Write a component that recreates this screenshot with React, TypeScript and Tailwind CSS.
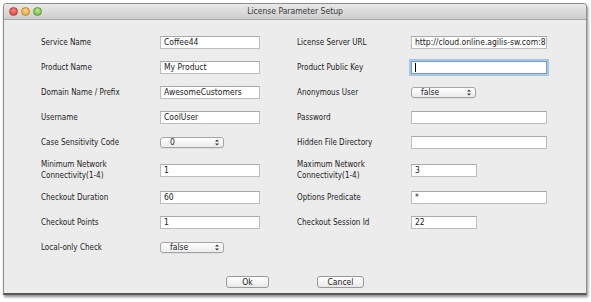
import React from "react";

const font = { fontFamily: '"DejaVu Sans Condensed", "DejaVu Sans", "Liberation Sans", sans-serif' };

function TextField({ value, w, focus }: { value: string; w: string; focus?: boolean }) {
  return (
    <div
      className={
        "h-[13px] bg-white flex items-center pl-[3px] text-[8.5px] text-[#1a1a1a] overflow-hidden whitespace-nowrap " +
        w +
        (focus
          ? " border border-[#6f9fd6] shadow-[0_0_0_2px_rgba(120,165,220,0.55)]"
          : " border border-[#bdbdbd] border-t-[#a9a9a9]")
      }
    >
      {focus ? <span className="w-px h-[9px] bg-black" /> : value}
    </div>
  );
}

function Select({ value, w }: { value: string; w: string }) {
  return (
    <div
      className={
        "h-[11px] rounded-[3px] border border-[#a5a5a5] bg-gradient-to-b from-white to-[#ececec] flex items-center justify-between pl-[9px] pr-[4px] text-[8.5px] text-[#1a1a1a] shadow-[0_1px_0_rgba(0,0,0,0.06)] " +
        w
      }
    >
      <span>{value}</span>
      <svg width="4" height="7" viewBox="0 0 4 7">
        <path d="M0 2.6 L2 0.4 L4 2.6 Z" fill="#333" />
        <path d="M0 4.4 L2 6.6 L4 4.4 Z" fill="#333" />
      </svg>
    </div>
  );
}

type Cell = { label: React.ReactNode; control: React.ReactNode } | null;

function Row({ h, left, right }: { h: string; left: Cell; right: Cell }) {
  return (
    <div className={"flex items-center " + h}>
      <div className="w-[119px] text-[8px] text-[#1c1c1c] leading-[11px]">{left?.label}</div>
      <div className="w-[137px]">{left?.control}</div>
      <div className="w-[114px] text-[8px] text-[#1c1c1c] leading-[11px]">{right?.label}</div>
      <div>{right?.control}</div>
    </div>
  );
}

export default function App() {
  return (
    <div className="w-[591px] h-[302px] bg-white pt-[3px] pl-[3px] pr-[4px] pb-[7px]" style={font}>
      <div className="h-full flex flex-col rounded-t-[4px] border border-[#8e8e8e] border-b-[#5a5a5a] border-b-2 shadow-[1px_2px_3px_rgba(0,0,0,0.45)] overflow-hidden">
        <div className="h-[16px] relative flex items-center bg-gradient-to-b from-[#e9e9e9] to-[#cdcdcd] border-b border-[#a9a9a9]">
          <div className="flex items-center gap-[3px] pl-[5px]">
            <span className="w-[9px] h-[9px] rounded-full bg-[radial-gradient(circle_at_50%_35%,#ff8a84,#d8302a)] border border-[#b8423c]" />
            <span className="w-[9px] h-[9px] rounded-full bg-[radial-gradient(circle_at_50%_35%,#ffd27a,#e0a02a)] border border-[#c08a2c]" />
            <span className="w-[9px] h-[9px] rounded-full bg-[radial-gradient(circle_at_50%_35%,#b8e98a,#6cb43a)] border border-[#5a9a34]" />
          </div>
          <div className="absolute inset-0 flex items-center justify-center text-[8.5px] text-[#3a3a3a]">
            License Parameter Setup
          </div>
        </div>
        <div className="flex-1 bg-[#ececec] pt-[10px] pl-[37px] flex flex-col">
          <Row
            h="h-[25px]"
            left={{ label: "Service Name", control: <TextField value="Coffee44" w="w-[100px]" /> }}
            right={{ label: "License Server URL", control: <TextField value="http://cloud.online.agilis-sw.com:8" w="w-[136px]" /> }}
          />
          <Row
            h="h-[25px]"
            left={{ label: "Product Name", control: <TextField value="My Product" w="w-[100px]" /> }}
            right={{ label: "Product Public Key", control: <TextField value="" w="w-[136px]" focus /> }}
          />
          <Row
            h="h-[25px]"
            left={{ label: "Domain Name / Prefix", control: <TextField value="AwesomeCustomers" w="w-[100px]" /> }}
            right={{ label: "Anonymous User", control: <Select value="false" w="w-[65px]" /> }}
          />
          <Row
            h="h-[25px]"
            left={{ label: "Username", control: <TextField value="CoolUser" w="w-[100px]" /> }}
            right={{ label: "Password", control: <TextField value="" w="w-[136px]" /> }}
          />
          <Row
            h="h-[25px]"
            left={{ label: "Case Sensitivity Code", control: <Select value="0" w="w-[64px]" /> }}
            right={{ label: "Hidden File Directory", control: <TextField value="" w="w-[136px]" /> }}
          />
          <Row
            h="h-[30px]"
            left={{
              label: (
                <>
                  Minimum Network
                  <br />
                  Connectivity(1-4)
                </>
              ),
              control: <TextField value="1" w="w-[100px]" />,
            }}
            right={{
              label: (
                <>
                  Maximum Network
                  <br />
                  Connectivity(1-4)
                </>
              ),
              control: <TextField value="3" w="w-[66px]" />,
            }}
          />
          <Row
            h="h-[25px]"
            left={{ label: "Checkout Duration", control: <TextField value="60" w="w-[100px]" /> }}
            right={{ label: "Options Predicate", control: <TextField value="*" w="w-[136px]" /> }}
          />
          <Row
            h="h-[25px]"
            left={{ label: "Checkout Points", control: <TextField value="1" w="w-[100px]" /> }}
            right={{ label: "Checkout Session Id", control: <TextField value="22" w="w-[66px]" /> }}
          />
          <Row
            h="h-[25px]"
            left={{ label: "Local-only Check", control: <Select value="false" w="w-[64px]" /> }}
            right={null}
          />
          <div className="flex mt-[16px] pl-[185px]">
            <div className="w-[43px] h-[12px] rounded-[3px] border border-[#9a9a9a] bg-gradient-to-b from-white to-[#e8e8e8] flex items-center justify-center text-[8.5px] text-[#1a1a1a]">
              Ok
            </div>
            <div className="ml-[48px] w-[47px] h-[12px] rounded-[3px] border border-[#9a9a9a] bg-gradient-to-b from-white to-[#e8e8e8] flex items-center justify-center text-[8.5px] text-[#1a1a1a]">
              Cancel
            </div>
          </div>
        </div>
      </div>
    </div>
  );
}
